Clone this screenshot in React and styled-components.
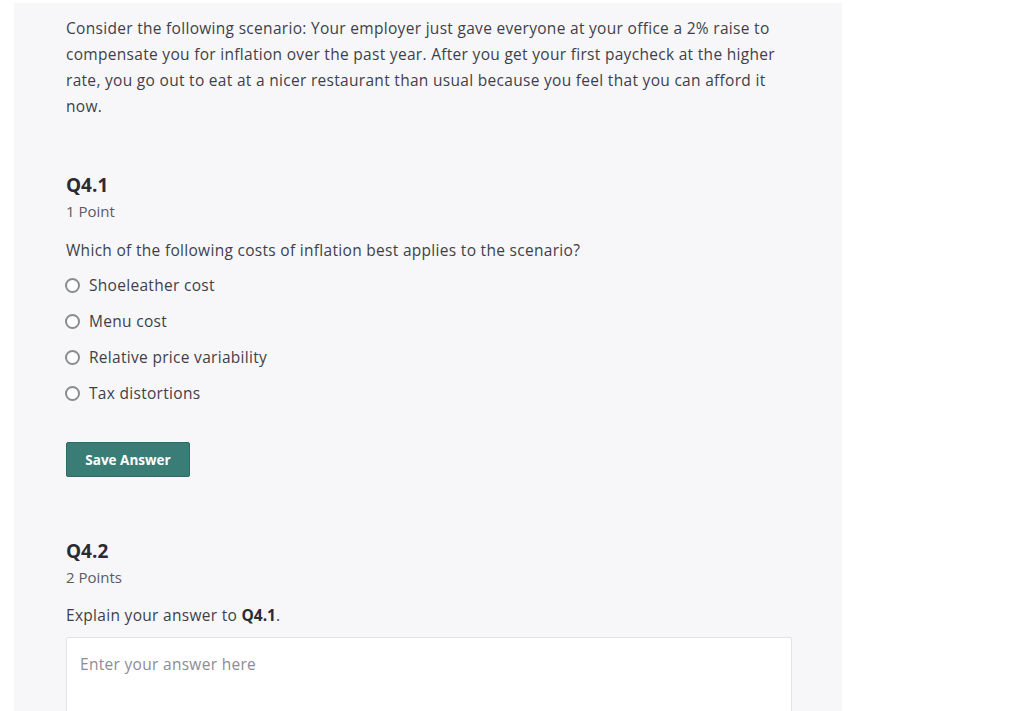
import React, { useState } from "react";
import styled, { createGlobalStyle } from "styled-components";

const GlobalStyle = createGlobalStyle`
	body {
		margin: 0;
		background: #fff;
		font-family: "Open Sans", Lato, sans-serif;
		color: #3f3f4a;
	}
`;

const Page = styled.div`
	padding: 3px 0 0 14px;
	height: 708px;
	overflow: hidden;
`;

const Panel = styled.div`
	width: 828px;
	min-height: 760px;
	box-sizing: border-box;
	background: #f7f7f9;
	padding: 12px 50px 0 52px;
`;

const Prompt = styled.p`
	margin: 0;
	font-size: 15.5px;
	letter-spacing: 0.3px;
	line-height: 26px;
`;

const QuestionTitle = styled.h3`
	margin: ${p => p.$top}px 0 0;
	font-size: 19px;
	line-height: 26px;
	font-weight: 700;
	color: #2b2b33;
`;

const Points = styled.div`
	font-size: 15px;
	line-height: 26px;
	color: #5a5a64;
`;

const QuestionText = styled.div`
	margin-top: ${p => p.$top}px;
	font-size: 15.5px;
	letter-spacing: 0.3px;
	line-height: 26px;

	b {
		color: #2b2b33;
		letter-spacing: 0;
	}
`;

const Options = styled.div`
	margin-top: 4px;
	display: flex;
	flex-direction: column;
`;

const Option = styled.label`
	display: flex;
	align-items: center;
	height: 36px;
	font-size: 15.5px;
	letter-spacing: 0.3px;
	cursor: pointer;
`;

const Radio = styled.span`
	width: 11px;
	height: 11px;
	border-radius: 50%;
	border: 2px solid ${p => (p.$checked ? "#3a7d76" : "#8a8d90")};
	margin: 0 9px 0 -1px;
	background: ${p => (p.$checked ? "radial-gradient(#3a7d76 35%, #fff 40%)" : "#fff")};
	flex-shrink: 0;
`;

const SaveButton = styled.button`
	margin-top: 31px;
	width: 124px;
	height: 35px;
	border: 1px solid #2f6b65;
	border-radius: 2px;
	background: #3a7d76;
	color: #fff;
	font-family: "Open Sans", Lato, sans-serif;
	font-size: 13.5px;
	font-weight: 700;
	cursor: pointer;
`;

const Answer = styled.textarea`
	display: block;
	margin-top: 9px;
	width: 100%;
	height: 120px;
	box-sizing: border-box;
	border: 1px solid #e2e3e6;
	border-radius: 2px;
	background: #fff;
	padding: 15px 13px;
	font-family: "Open Sans", sans-serif;
	font-size: 15.5px;
	letter-spacing: 0.3px;
	resize: none;
	outline: none;

	&::placeholder {
		color: #8c8c92;
	}
`;

const choices = ["Shoeleather cost", "Menu cost", "Relative price variability", "Tax distortions"];

export default function App() {
	const [picked, setPicked] = useState(null);

	return (
		<Page>
			<GlobalStyle />
			<Panel>
				<Prompt>
					Consider the following scenario: Your employer just gave everyone at your office a 2% raise to
					compensate you for inflation over the past year. After you get your first paycheck at the higher
					rate, you go out to eat at a nicer restaurant than usual because you feel that you can afford it
					now.
				</Prompt>

				<QuestionTitle $top={53}>Q4.1</QuestionTitle>
				<Points>1 Point</Points>
				<QuestionText $top={13}>Which of the following costs of inflation best applies to the scenario?</QuestionText>
				<Options>
					{choices.map((c, i) => (
						<Option key={c} onClick={() => setPicked(i)}>
							<Radio $checked={picked === i} />
							{c}
						</Option>
					))}
				</Options>
				<SaveButton>Save Answer</SaveButton>

				<QuestionTitle $top={61}>Q4.2</QuestionTitle>
				<Points>2 Points</Points>
				<QuestionText $top={12}>
					Explain your answer to <b>Q4.1</b>.
				</QuestionText>
				<Answer placeholder="Enter your answer here" />
			</Panel>
		</Page>
	);
}
